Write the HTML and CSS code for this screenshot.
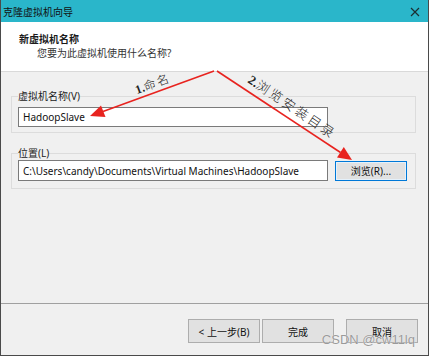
FILE: index.html
```html
<!DOCTYPE html>
<html lang="zh-CN">
<head>
    <meta charset="UTF-8">
    <meta name="viewport" content="width=device-width, initial-scale=1.0">
    <title>克隆虚拟机向导</title>
    <link rel="stylesheet" href="styles.css">
</head>
<body>
    <div class="window">
        <div class="titlebar">
            <span class="title">克隆虚拟机向导</span>
            <svg class="close" width="10" height="10" viewBox="0 0 10 10">
                <path d="M1 1 L9 9 M9 1 L1 9" stroke="#1b2f33" stroke-width="1.2" fill="none"/>
            </svg>
        </div>

        <div class="header">
            <div class="heading">新虚拟机名称</div>
            <div class="subheading">您要为此虚拟机使用什么名称?</div>
        </div>

        <div class="content">
            <fieldset class="group group-name">
                <legend>虚拟机名称(V)</legend>
                <input class="field field-name" type="text" value="HadoopSlave">
            </fieldset>
            <fieldset class="group group-location">
                <legend>位置(L)</legend>
                <div class="location-row">
                    <input class="field field-location" type="text" value="C:\Users\candy\Documents\Virtual Machines\HadoopSlave">
                    <button type="button" class="btn btn-browse">浏览(R)...</button>
                </div>
            </fieldset>
        </div>

        <div class="footer">
            <button type="button" class="btn">&lt; 上一步(B)</button>
            <button type="button" class="btn">完成</button>
            <button type="button" class="btn btn-cancel">取消</button>
        </div>

        <!-- hand-drawn annotations on top of the dialog -->
        <svg class="annotations" width="429" height="356" viewBox="0 0 429 356">
            <g stroke="#e8231f" stroke-width="1.6" fill="none">
                <line x1="214" y1="71" x2="103" y2="111.5"/>
                <line x1="217" y1="71" x2="340.5" y2="152.5"/>
            </g>
            <g fill="#e8231f">
                <polygon points="90,116 105.5,117 101,105.5"/>
                <polygon points="352,160 337,157.5 343.8,147"/>
            </g>
            <text class="note" transform="translate(137 94) rotate(-20)"><tspan class="note-num">1.</tspan>命名</text>
            <text class="note note-big" transform="translate(247 82) rotate(34)"><tspan class="note-num">2.</tspan>浏览安装目录</text>
        </svg>

        <div class="watermark">CSDN @cw11lq</div>
    </div>
</body>
</html>
```

FILE: styles.css
```css
:root {
    --titlebar: #2ab6ca;
    --dialog-bg: #f0f0f0;
    --group-line: #dcdcdc;
    --field-line: #7a7a7a;
    --btn-bg: #e1e1e1;
    --btn-line: #adadad;
    --focus-blue: #0078d7;
    --text: #1a1a1a;
}

* {
    box-sizing: border-box;
}

body {
    margin: 0;
    background-color: #fff;
    font-family: "Noto Sans", "Noto Sans CJK SC", sans-serif;
    font-size: 10px;
    color: var(--text);
}

.window {
    position: relative;
    width: 429px;
    height: 356px;
    display: flex;
    flex-direction: column;
    background-color: var(--dialog-bg);
    border: 1px solid #4a4a4a;
    border-top: none;
}

.titlebar {
    height: 22px;
    display: flex;
    align-items: center;
    justify-content: space-between;
    padding: 1px 8px 0 2px;
    background-color: var(--titlebar);
}

.title {
    font-size: 10px;
    line-height: 12px;
    color: #111;
}

.header {
    height: 50px;
    padding: 11px 0 0 18px;
    background-color: #fff;
    border-bottom: 1px solid #d9d9d9;
}

.heading {
    font-weight: bold;
    line-height: 12px;
}

.subheading {
    margin-top: 2px;
    padding-left: 18px;
    line-height: 12px;
    color: #333;
}

.content {
    flex: 1;
    padding-top: 18px;
}

.group {
    margin: 0 12px 0 10px;
    padding: 5px 6px 5px 6px;
    border: 1px solid var(--group-line);
    min-width: 0;
}

.group legend {
    padding: 0;
    line-height: 12px;
    color: #222;
}

.group-location {
    margin-top: 14px;
    padding-top: 1px;
    padding-bottom: 7px;
}

.field {
    display: block;
    width: 310px;
    height: 21px;
    margin: 0;
    padding: 0 4px;
    border: 1px solid var(--field-line);
    background-color: #fff;
    font-family: inherit;
    font-size: 10px;
    color: #111;
    outline: none;
}

.field-name {
    height: 20px;
}

.location-row {
    display: flex;
    align-items: center;
    gap: 7px;
}

.btn {
    width: 72px;
    height: 24px;
    padding: 0;
    border: 1px solid var(--btn-line);
    background-color: var(--btn-bg);
    font-family: inherit;
    font-size: 10px;
    color: #111;
}

.btn-browse {
    height: 20px;
    border-color: var(--focus-blue);
    box-shadow: inset 0 0 0 1px #e5f1fb;
}

.footer {
    display: flex;
    justify-content: flex-end;
    gap: 2px;
    padding: 15px 10px 12px 0;
    border-top: 1px solid #a0a0a0;
}

.btn-cancel {
    margin-left: 10px;
}

.annotations {
    position: absolute;
    top: 0;
    left: -1px;
    pointer-events: none;
}

.note {
    font-family: "Liberation Serif", "Noto Sans CJK SC", serif;
    font-size: 12px;
    font-weight: 300;
    letter-spacing: 2px;
    fill: #222;
}

.note-big {
    font-size: 13px;
    letter-spacing: 2.5px;
}

.note-num {
    font-weight: bold;
    letter-spacing: 0;
}

.watermark {
    position: absolute;
    right: 13px;
    bottom: 8px;
    font-family: "Liberation Sans", Arial, sans-serif;
    font-size: 13px;
    line-height: 14px;
    color: #9a9a9a;
    text-shadow: 0 0 1px #fff;
}
```
